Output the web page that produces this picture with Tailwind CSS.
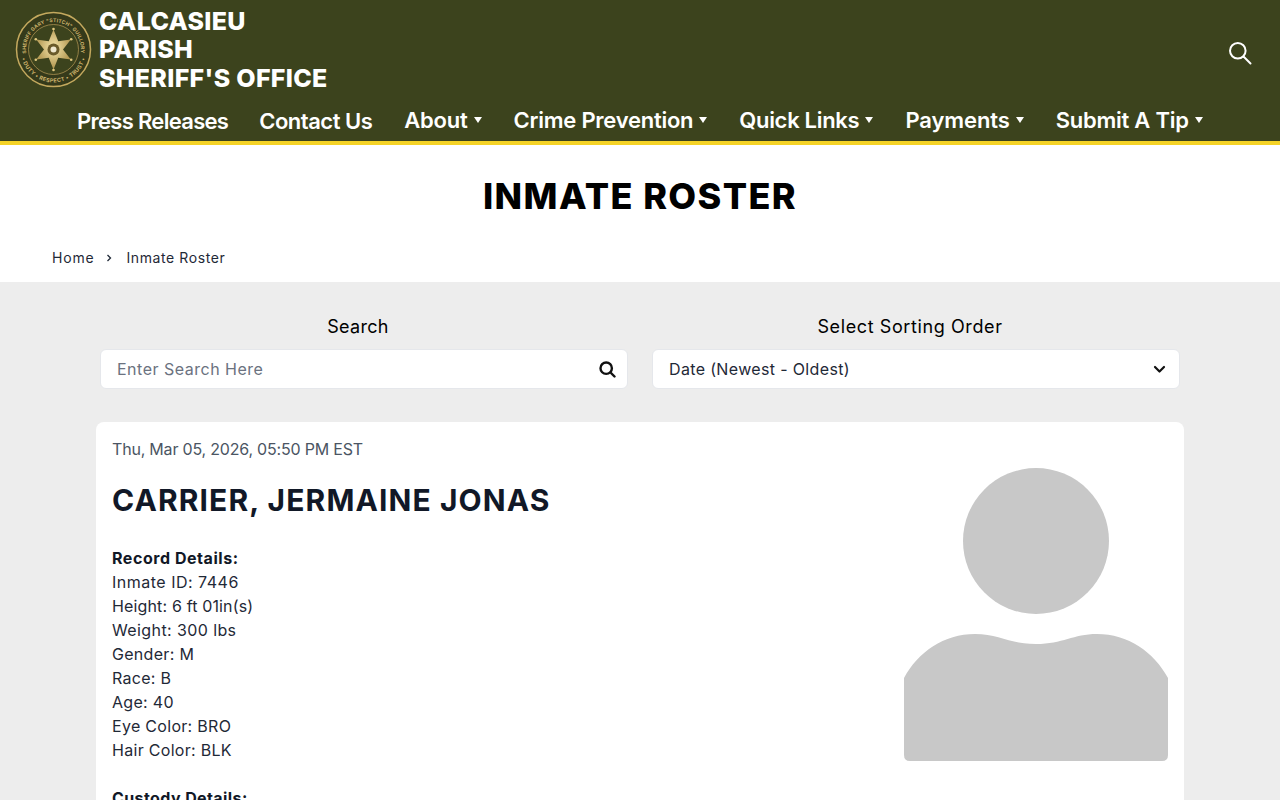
<!DOCTYPE html>
<html lang="en">
<head>
  <meta charset="UTF-8" />
  <title>Inmate Roster</title>
  <script src="https://cdn.jsdelivr.net/npm/@tailwindcss/browser@4"></script>
</head>
<body class="bg-[#ededed] font-['Inter','Liberation_Sans',sans-serif] text-[#111827]">
<div class="h-[800px] overflow-hidden">
  <!-- header -->
  <header class="h-[145px] bg-[#3c431d] border-b-4 border-[#f5d327] text-white relative">
    <div class="flex items-center h-[98px] pl-[15px]">
      <svg class="w-[77px] h-[77px] shrink-0" viewBox="0 0 77 77">
        <defs>
          <radialGradient id="gold" cx="50%" cy="45%" r="60%">
            <stop offset="0%" stop-color="#f6e6ac" />
            <stop offset="100%" stop-color="#a68a42" />
          </radialGradient>
          <path id="arcTop" d="M11.400 43.300A27.500 27.500 0 1 1 65.600 43.300" />
          <path id="arcBottom" d="M5.500 38.500a33 33 0 0 0 66 0" />
        </defs>
        <circle cx="38.500" cy="38.500" r="37" fill="#353a1a" stroke="#c4a95e" stroke-width="1.500" />
        <circle cx="38.500" cy="38.500" r="25" fill="#3c431d" stroke="#a99050" stroke-width="0.800" />
        <text font-size="5" font-weight="700" fill="#cbb26a" text-anchor="middle" letter-spacing="0.200"><textPath href="#arcTop" startOffset="50%">SHERIFF GARY "STITCH" GUILLORY</textPath></text>
        <text font-size="5.500" font-weight="700" fill="#cbb26a" text-anchor="middle" letter-spacing="0.300"><textPath href="#arcBottom" startOffset="50%">• DUTY • RESPECT • TRUST •</textPath></text>
        <path fill="url(#gold)" d="M38.500 18.500L43.250 30.270 55.800 28.500 48 38.500 55.800 48.500 43.250 46.730 38.500 58.500 33.750 46.730 21.200 48.500 29 38.500 21.200 28.500 33.750 30.270Z" />
        <g fill="#e2c97f">
          <circle cx="38.500" cy="18" r="1.300" />
          <circle cx="56.200" cy="28.200" r="1.300" />
          <circle cx="56.200" cy="48.800" r="1.300" />
          <circle cx="38.500" cy="59" r="1.300" />
          <circle cx="20.800" cy="48.800" r="1.300" />
          <circle cx="20.800" cy="28.200" r="1.300" />
        </g>
        <circle cx="38.500" cy="38.500" r="6" fill="#6a5a2a" />
        <circle cx="38.500" cy="38.500" r="3" fill="#efe8cf" />
      </svg>
      <div class="ml-[7px] mt-[1px] w-[240px] text-[25px] leading-[28.500px] font-extrabold tracking-[0.300px]">
        <div>CALCASIEU</div>
        <div>PARISH</div>
        <div class="whitespace-nowrap">SHERIFF'S OFFICE</div>
      </div>
      <svg class="absolute right-[28px] top-[41px] w-[24px] h-[24px]" viewBox="0 0 24 24" fill="none" stroke="#fff" stroke-width="2" stroke-linecap="round">
        <circle cx="9.800" cy="9.800" r="7.800" />
        <path d="M15.500 15.500l7 7" />
      </svg>
    </div>
    <nav class="flex items-center gap-8 pl-[77px] pt-[7px] text-[22px] leading-[28px] font-semibold whitespace-nowrap">
      <a class="mt-[2px] tracking-[-0.700px]">Press Releases</a>
      <a class="mt-[2px] -ml-[1px] tracking-[-0.500px]">Contact Us</a>
      <a class="flex items-center tracking-[-0.200px]">About<span class="ml-[6px] w-0 h-0 border-x-[4px] border-x-transparent border-t-[6px] border-t-white"></span></a>
      <a class="flex items-center tracking-[-0.250px]">Crime Prevention<span class="ml-[6px] w-0 h-0 border-x-[4px] border-x-transparent border-t-[6px] border-t-white"></span></a>
      <a class="flex items-center tracking-[-0.300px]">Quick Links<span class="ml-[6px] w-0 h-0 border-x-[4px] border-x-transparent border-t-[6px] border-t-white"></span></a>
      <a class="flex items-center tracking-[-0.100px]">Payments<span class="ml-[6px] w-0 h-0 border-x-[4px] border-x-transparent border-t-[6px] border-t-white"></span></a>
      <a class="flex items-center tracking-[-0.250px]">Submit A Tip<span class="ml-[6px] w-0 h-0 border-x-[4px] border-x-transparent border-t-[6px] border-t-white"></span></a>
    </nav>
  </header>

  <!-- title + breadcrumb -->
  <section class="bg-white h-[137px]">
    <h1 class="pt-[28px] text-center text-[36px] leading-[46px] font-extrabold tracking-[1.400px] text-black">INMATE ROSTER</h1>
    <div class="flex items-center mt-[29px] pl-[52px] text-[14px] leading-[20px] text-[#1f2937]">
      <span class="tracking-[0.800px]">Home</span>
      <svg class="w-[6px] h-[8px] ml-[12px] mr-[14px]" viewBox="0 0 6 8" fill="none" stroke="#1f2937" stroke-width="1.300"><path d="M1.500 1l3 3-3 3" /></svg>
      <span class="-mt-[1px] tracking-[0.600px]">Inmate Roster</span>
    </div>
  </section>

  <!-- search row -->
  <section class="flex gap-6 pt-[33px] pl-[100px] pr-[100px]">
    <div class="w-[528px]">
      <label class="block pr-[12px] text-center text-[18px] leading-[24px] font-normal tracking-[0.300px] text-black">Search</label>
      <div class="mt-[10px] h-[40px] bg-white border border-[#e5e7eb] rounded-md flex items-center justify-between pl-4 pr-[11px]">
        <span class="text-[16px] tracking-[0.500px] text-[#6b7280]">Enter Search Here</span>
        <svg class="w-[17px] h-[17px]" viewBox="0 0 17 17" fill="none" stroke="#111" stroke-width="2.400" stroke-linecap="round">
          <circle cx="7.200" cy="7.200" r="5.700" />
          <path d="M11.500 11.500l4 4" />
        </svg>
      </div>
    </div>
    <div class="w-[528px]">
      <label class="block pr-[12px] text-center text-[18px] leading-[24px] font-normal tracking-[0.600px] text-black">Select Sorting Order</label>
      <div class="mt-[10px] h-[40px] bg-white border border-[#e5e7eb] rounded-md flex items-center justify-between pl-4 pr-[13px]">
        <span class="-mt-[1px] text-[16px] tracking-[0.350px] text-[#1f2937]">Date (Newest - Oldest)</span>
        <svg class="w-[13px] h-[9px]" viewBox="0 0 13 9" fill="none" stroke="#111" stroke-width="2.200" stroke-linecap="round" stroke-linejoin="round"><path d="M2 2l4.500 4.500L11 2" /></svg>
      </div>
    </div>
  </section>

  <!-- record card -->
  <section class="mt-[33px] mx-[96px] bg-white rounded-lg px-[16px] pt-[15px] flex justify-between">
    <div>
      <div class="text-[16px] leading-[24px] tracking-[-0.200px] text-[#4b5563]">Thu, Mar 05, 2026, 05:50 PM EST</div>
      <h2 class="mt-[21px] text-[30px] leading-[36px] font-bold tracking-[1.100px] text-[#111827]">CARRIER, JERMAINE JONAS</h2>
      <div class="mt-[28px] text-[16px] leading-[24px] tracking-[0.300px] text-[#1f2937]">
        <div class="font-bold tracking-[0.550px] text-[#111827]">Record Details:</div>
        <div class="tracking-[0.500px]">Inmate ID: 7446</div>
        <div class="tracking-[0.150px]">Height: 6 ft 01in(s)</div>
        <div class="tracking-[0.400px]">Weight: 300 lbs</div>
        <div>Gender: M</div>
        <div>Race: B</div>
        <div>Age: 40</div>
        <div>Eye Color: BRO</div>
        <div>Hair Color: BLK</div>
        <div class="mt-[24px] font-bold tracking-[0.400px] text-[#111827]">Custody Details:</div>
      </div>
    </div>
    <svg class="w-[264px] h-[296px] mt-[30px] blur-[0.600px]" viewBox="0 0 264 296" fill="#c8c8c8">
      <circle cx="132" cy="74" r="73" />
      <path d="M0 211C14 185 40 167 71 167C95 167 105 177 132 177C159 177 169 167 193 167C224 167 250 185 264 211V288Q264 294 258 294H6Q0 294 0 288Z" />
    </svg>
  </section>
</div>
</body>
</html>
